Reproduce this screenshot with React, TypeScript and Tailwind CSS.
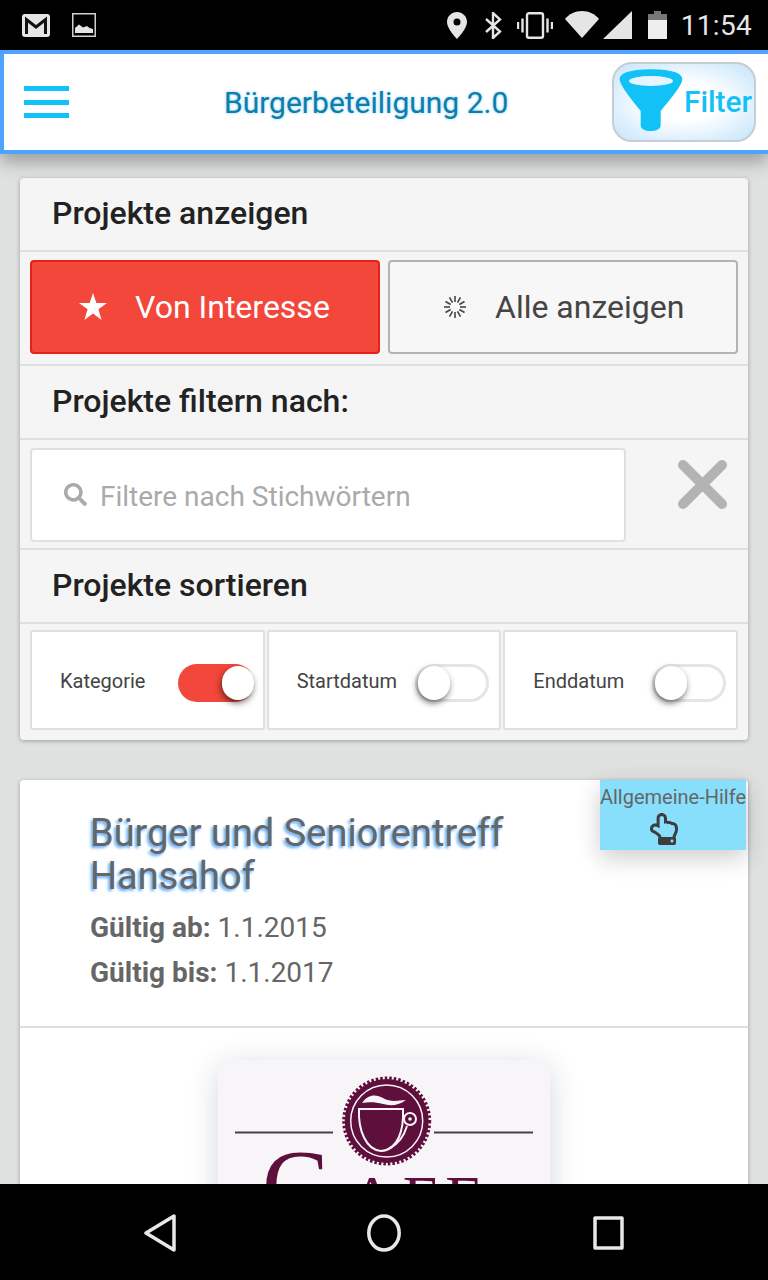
import React from 'react';
import { FaRegHandPointUp, FaSearch } from 'react-icons/fa';

// Status bar icons
const GmailIcon = () => (
  <svg width="28" height="23" viewBox="0 0 28 23">
    <rect width="28" height="23" rx="3" fill="#e5e5e5" />
    <path d="M4.5 20V5.5L14 13L23.5 5.5V20" fill="none" stroke="#111" strokeWidth="3" />
  </svg>
);

const PictureIcon = () => (
  <svg width="24" height="24" viewBox="0 0 24 24" className="ml-[22px]">
    <rect x="0.75" y="0.75" width="22.5" height="22.5" fill="none" stroke="#d0d0d0" strokeWidth="1.5" />
    <path d="M3 20V15L7 11.5L11 14.5L15 13L17.5 15L21 16V20Z" fill="#e5e5e5" />
  </svg>
);

const StatusIcons = () => (
  <>
    <svg width="20" height="27" viewBox="0 0 20 27" className="ml-auto">
      <path fillRule="evenodd" d="M10 0C4.5 0 0 4.4 0 10C0 17 10 27 10 27C10 27 20 17 20 10C20 4.4 15.5 0 10 0ZM10 13.5A3.5 3.5 0 1 1 10 6.5A3.5 3.5 0 0 1 10 13.5Z" fill="#e5e5e5" />
    </svg>
    <svg width="17" height="27" viewBox="0 0 17 27" className="ml-[18px]">
      <path d="M1 7L15 19.5L8 26V1L15 7.5L1 20" fill="none" stroke="#e5e5e5" strokeWidth="2.4" />
    </svg>
    <svg width="36" height="27" viewBox="0 0 36 27" className="ml-[15px]">
      <rect x="10" y="1.2" width="16" height="24.6" rx="2" fill="none" stroke="#e5e5e5" strokeWidth="2.4" />
      <path d="M5.5 6.5V20.5M1 10V17M30.5 6.5V20.5M35 10V17" stroke="#e5e5e5" strokeWidth="2.4" />
    </svg>
    <svg width="34" height="28" viewBox="0 0 34 28" className="ml-[12px]">
      <path d="M17 27L0 8C4 3 10 0 17 0C24 0 30 3 34 8Z" fill="#e5e5e5" />
    </svg>
    <svg width="29" height="28" viewBox="0 0 29 28" className="ml-[4px]">
      <path d="M29 0V28H0Z" fill="#e5e5e5" />
    </svg>
    <svg width="19" height="28" viewBox="0 0 19 28" className="ml-[16px]">
      <path d="M6 0H13V3H19V9H0V3H6Z" fill="#777" />
      <rect y="9" width="19" height="19" fill="#eeeeee" />
    </svg>
  </>
);

const Funnel = () => (
  <svg width="64" height="62" viewBox="0 0 64 62" className="mb-[4px]">
    <path d="M0.7 10C0.7 3 16 0.3 32 0.3C48 0.3 63.3 3 63.3 10C63.3 14 60 20 41.7 42V56C41.7 60 37 62 31.7 62C26 62 21.7 60 21.7 56V42C4 20 0.7 14 0.7 10Z" fill="#12c2f7" />
    <ellipse cx="32" cy="12" rx="22" ry="5" fill="#e8f4fd" />
  </svg>
);

const Spinner = () => (
  <svg width="24" height="24" viewBox="0 0 24 24" stroke="#444" strokeWidth="1.6">
    {[0, 30, 60, 90, 120, 150, 180, 210, 240, 270, 300, 330].map((deg) => (
      <line key={deg} x1="12" y1="1" x2="12" y2="7" transform={`rotate(${deg} 12 12)`} />
    ))}
  </svg>
);

const Toggle = ({ on }: { on?: boolean }) => (
  <div className={on
    ? 'mr-[-1px] mt-[4px] flex h-[38px] w-[76px] shrink-0 items-center justify-end rounded-full bg-[#f2473a]'
    : 'mt-[4px] flex h-[38px] w-[74px] shrink-0 items-center rounded-full border-[3px] border-[#e5e5e5] bg-white'}>
    <div className="h-[34px] w-[32px] rounded-full bg-white shadow-[-1px_3px_6px_rgba(0,0,0,0.55)]" />
  </div>
);

const SortCell = ({ label, on }: { label: string; on?: boolean }) => (
  <div className="flex items-center justify-between rounded-[2px] border-2 border-[#e0e0e0] bg-white pl-[28px] pr-[10px] pt-[2px] text-[20px] text-[#444]">
    <span>{label}</span>
    <Toggle on={on} />
  </div>
);

const SectionHead = ({ children }: { children: React.ReactNode }) => (
  <div className="flex h-[74px] items-center border-b-2 border-[#e0e0e0] pb-[2px] pl-[32px] text-[32px] font-medium text-[#222]">
    {children}
  </div>
);

const CafeLogo = () => (
  <svg width="332" height="300" viewBox="0 0 332 300">
    <path d="M17 72.5H115M216 72.5H315" stroke="#444" strokeWidth="2" />
    <circle cx="168.7" cy="61" r="42.5" fill="none" stroke="#5f0f3c" strokeWidth="4" strokeDasharray="2.5 2" />
    <circle cx="168.7" cy="61" r="42" fill="#5f0f3c" />
    <circle cx="168.7" cy="61" r="36" fill="none" stroke="#f7f5f8" strokeWidth="1.5" />
    <path d="M141 49H185C186 70 180 90 163 91C148 90 140 70 141 49Z" fill="#5f0f3c" stroke="#f7f5f8" strokeWidth="2" />
    <path d="M144 43C150 34 158 34 165 38C172 42 178 41 188 40C180 46 172 46 165 44C158 42 150 42 144 43Z" fill="#f7f5f8" />
    <path d="M189 66C186 76 180 84 172 88" fill="none" stroke="#f7f5f8" strokeWidth="2" />
    <circle cx="192" cy="59" r="6" fill="none" stroke="#f7f5f8" strokeWidth="2" />
    <circle cx="192" cy="59" r="1.8" fill="#f7f5f8" />
    <text x="44" y="158" fontSize="100" fontFamily="'Liberation Serif', serif" fill="#5f0f3c">C</text>
    <text x="132" y="158" fontSize="62" letterSpacing="8" fontFamily="'Liberation Serif', serif" fill="#5f0f3c">AFE</text>
  </svg>
);

const App: React.FC = () => {
  return (
    <div className="flex h-[1280px] w-[768px] flex-col overflow-hidden bg-[#dfe1e0] font-['Roboto',sans-serif]">

      {/* Android status bar */}
      <div className="flex h-[50px] shrink-0 items-center bg-black pl-[22px] pr-[16px]">
        <GmailIcon />
        <PictureIcon />
        <StatusIcons />
        <span className="ml-[14px] mt-[2px] text-[28px] leading-none tracking-[0.3px] text-[#e5e5e5]">11:54</span>
      </div>

      {/* App header */}
      <div className="relative z-10 flex h-[104px] shrink-0 items-center border-y-4 border-l-4 border-[#4da3ff] bg-white pl-[20px] pr-[12px] shadow-[0_8px_16px_rgba(0,0,0,0.3)]">
        <div className="flex h-[32px] w-[45px] flex-col justify-between">
          <div className="h-[5px] bg-[#12c2f7]" />
          <div className="h-[5px] bg-[#12c2f7]" />
          <div className="h-[5px] bg-[#12c2f7]" />
        </div>
        <h1 className="ml-[155px] text-[30px] font-normal text-[#0a7fa8] [text-shadow:0_0_3px_#8ac6ff]">
          Bürgerbeteiligung 2.0
        </h1>
        <div className="ml-auto flex h-[80px] w-[144px] items-center rounded-[20px] border-2 border-[#c5cdd5] bg-[radial-gradient(ellipse_at_center,#ffffff_35%,#c4e4fb_100%)] pl-[5px]">
          <Funnel />
          <span className="ml-[1px] text-[29.8px] font-medium text-[#12c2f7]">Filter</span>
        </div>
      </div>

      <main className="flex-1 overflow-hidden px-[20px] pt-[24px]">

        {/* Filter panel */}
        <div className="rounded-[4px] bg-[#f5f5f5] shadow-[0_1px_4px_rgba(0,0,0,0.3)]">
          <SectionHead>Projekte anzeigen</SectionHead>
          <div className="grid h-[114px] grid-cols-2 gap-[8px] border-b-2 border-[#e0e0e0] px-[10px] pb-[10px] pt-[8px] text-[32px]">
            <div className="flex items-center rounded-[4px] border-2 border-[#e62117] bg-[#f2473a] pl-[47px] text-white">
              <svg width="28" height="28" viewBox="0 0 28 28">
                <path d="M14 0L17.4 10H28L19.4 16.3L22.6 27L14 20.5L5.4 27L8.6 16.3L0 10H10.6Z" fill="#fff" />
              </svg>
              <span className="ml-[28px]">Von Interesse</span>
            </div>
            <div className="flex items-center rounded-[4px] border-2 border-[#b3b3b3] bg-[#f7f7f7] pl-[53px] text-[#444]">
              <Spinner />
              <span className="ml-[28px]">Alle anzeigen</span>
            </div>
          </div>
          <SectionHead>Projekte filtern nach:</SectionHead>
          <div className="flex h-[110px] items-start border-b-2 border-[#e0e0e0] pl-[10px] pt-[8px]">
            <div className="flex h-[94px] w-[596px] items-center rounded-[4px] border-2 border-[#e0e0e0] bg-white pl-[32px] text-[28px] text-[#aaa]">
              <FaSearch size={23} color="#aaa" className="mb-[2px]" />
              <span className="ml-[13px] mt-[3px]">Filtere nach Stichwörtern</span>
            </div>
            <svg width="49" height="49" viewBox="0 0 49 49" className="ml-[52px] mt-[12px]" stroke="#b3b3b3" strokeWidth="10" strokeLinecap="round">
              <path d="M5 5L44 44M44 5L5 44" />
            </svg>
          </div>
          <SectionHead>Projekte sortieren</SectionHead>
          <div className="grid h-[116px] grid-cols-3 gap-[2px] px-[10px] pb-[10px] pt-[6px]">
            <SortCell label="Kategorie" on />
            <SortCell label="Startdatum" />
            <SortCell label="Enddatum" />
          </div>
        </div>

        {/* Project card */}
        <div className="relative mt-[40px] h-[600px] rounded-t-[4px] bg-white shadow-[0_1px_4px_rgba(0,0,0,0.3)]">
          <div className="absolute right-[2px] top-0 flex h-[70px] w-[146px] flex-col items-center bg-[#87dffb] text-[20px] leading-[34px] text-[#666] shadow-[0_8px_24px_rgba(0,0,0,0.2)]">
            <span className="whitespace-nowrap">Allgemeine-Hilfe</span>
            <FaRegHandPointUp size={32} color="#3d3d3d" className="mr-[18px] mt-[-1px]" />
          </div>
          <div className="h-[248px] border-b-2 border-[#e0e0e0] pl-[70px] pt-[32px] text-[#666]">
            <h2 className="text-[38px] font-normal leading-[43px] [text-shadow:-2px_2px_3px_#5aa9ff]">
              Bürger und Seniorentreff
              <br />
              Hansahof
            </h2>
            <p className="mt-[7px] text-[28px] leading-[45px]"><b className="font-bold">Gültig ab:</b> 1.1.2015</p>
            <p className="text-[28px] leading-[45px]"><b className="font-bold">Gültig bis:</b> 1.1.2017</p>
          </div>
          <div className="flex justify-center pt-[32px]">
            <div className="h-[300px] w-[332px] overflow-hidden rounded-[12px] bg-[#f7f5f8] shadow-[0_6px_30px_rgba(0,40,50,0.18)]">
              <CafeLogo />
            </div>
          </div>
        </div>
      </main>

      {/* Android nav bar */}
      <div className="relative z-10 flex h-[96px] shrink-0 items-center bg-black pl-[144px] pt-[2px]">
        <svg width="32" height="38" viewBox="0 0 32 38" fill="none" stroke="#e8e8e8" strokeWidth="3.5" strokeLinejoin="round">
          <path d="M2 19L30 2V36Z" />
        </svg>
        <svg width="34" height="38" viewBox="0 0 34 38" fill="none" stroke="#e8e8e8" strokeWidth="3.5" className="ml-[191px]">
          <ellipse cx="17" cy="19" rx="15.2" ry="17" />
        </svg>
        <svg width="31" height="34" viewBox="0 0 31 34" fill="none" stroke="#e8e8e8" strokeWidth="3.5" strokeLinejoin="round" className="ml-[192px]">
          <rect x="2" y="2" width="27" height="30" />
        </svg>
      </div>
    </div>
  );
};

export default App;
